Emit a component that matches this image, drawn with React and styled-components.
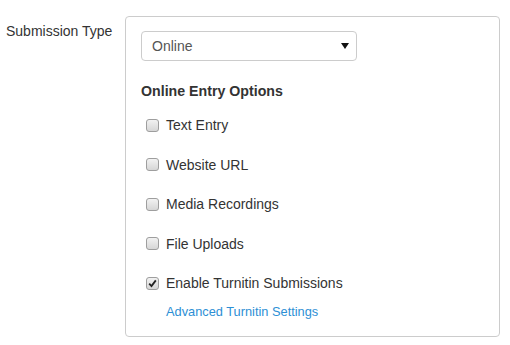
import React from "react";
import styled, { createGlobalStyle } from "styled-components";

const GlobalStyle = createGlobalStyle`
    body {
        margin: 0;
        background: #fff;
        font-family: "Liberation Sans", Arial, sans-serif;
        font-size: 14px;
        color: #333;
    }
`;

const Page = styled.div`
    display: flex;
    align-items: flex-start;
    padding: 16px 0 0 6px;
`;

const FieldLabel = styled.div`
    width: 119px;
    margin-top: 5px;
    line-height: 20px;
    color: #333;
`;

const Panel = styled.div`
    width: 344px;
    border: 1px solid #ccc;
    border-radius: 4px;
    padding: 14px 14px 14px 15px;
`;

const Select = styled.div`
    box-sizing: border-box;
    width: 216px;
    height: 30px;
    border: 1px solid #ccc;
    border-radius: 4px;
    display: flex;
    align-items: center;
    justify-content: space-between;
    padding: 0 7px 0 10px;
    color: #555;
`;

const Heading = styled.div`
    margin-top: 20px;
    font-weight: bold;
    font-size: 14.2px;
    line-height: 20px;
    color: #333;
`;

const Options = styled.div`
    display: flex;
    flex-direction: column;
    gap: 19.5px;
    margin: 14px 0 0 5px;
`;

const Option = styled.label`
    display: flex;
    align-items: center;
    gap: 7px;
    line-height: 20px;
    color: #333;
`;

const Box = styled.span`
    box-sizing: border-box;
    width: 13px;
    height: 13px;
    border: 1px solid #9e9e9e;
    border-radius: 3px;
    background: linear-gradient(#f2f2f2, #d6d6d6);
    display: flex;
    align-items: center;
    justify-content: center;
`;

const Link = styled.a`
    display: block;
    margin: 9px 0 0 25px;
    line-height: 20px;
    font-size: 12.8px;
    color: #2d8fd5;
    text-decoration: none;
`;

const Checkbox = ({ checked }) => (
    <Box>
        {checked && (
            <svg width="9" height="9" viewBox="0 0 9 9">
                <path d="M1.2 4.6 L3.5 7 L7.8 1.4" fill="none" stroke="#222" strokeWidth="1.8" />
            </svg>
        )}
    </Box>
);

const options = [
    { text: "Text Entry" },
    { text: "Website URL" },
    { text: "Media Recordings" },
    { text: "File Uploads" },
    { text: "Enable Turnitin Submissions", checked: true },
];

const App = () => (
    <>
        <GlobalStyle />
        <Page>
            <FieldLabel>Submission Type</FieldLabel>
            <Panel>
                <Select>
                    <span>Online</span>
                    <svg width="8" height="6" viewBox="0 0 8 6">
                        <path d="M0 0 H8 L4 6 Z" fill="#111" />
                    </svg>
                </Select>
                <Heading>Online Entry Options</Heading>
                <Options>
                    {options.map(o => (
                        <Option key={o.text}>
                            <Checkbox checked={o.checked} /> {o.text}
                        </Option>
                    ))}
                </Options>
                <Link href="#">Advanced Turnitin Settings</Link>
            </Panel>
        </Page>
    </>
);

export default App;
